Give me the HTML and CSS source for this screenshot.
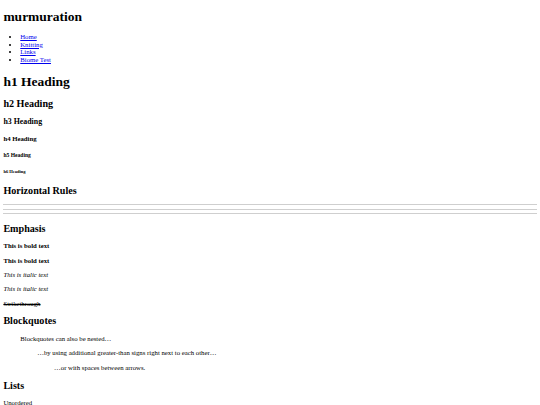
FILE: index.html
```html
<!DOCTYPE html>
<html lang="en">
<head>
    <meta charset="UTF-8">
    <meta name="viewport" content="width=device-width, initial-scale=1.0">
    <title>murmuration</title>
    <link rel="stylesheet" href="styles.css">
</head>
<body>

    <!-- Site header -->
    <header class="site-header">
        <h1 class="site-title">murmuration</h1>
        <nav class="site-nav">
            <ul>
                <li><a href="#">Home</a></li>
                <li><a href="#">Knitting</a></li>
                <li><a href="#">Links</a></li>
                <li><a href="#">Biome Test</a></li>
            </ul>
        </nav>
    </header>

    <!-- Post body -->
    <main class="post">
        <h1>h1 Heading</h1>
        <h2>h2 Heading</h2>
        <h3>h3 Heading</h3>
        <h4>h4 Heading</h4>
        <h5>h5 Heading</h5>
        <h6>h6 Heading</h6>

        <h2>Horizontal Rules</h2>
        <hr>
        <hr>
        <hr>

        <h2>Emphasis</h2>
        <p><strong>This is bold text</strong></p>
        <p><strong>This is bold text</strong></p>
        <p><em>This is italic text</em></p>
        <p><em>This is italic text</em></p>
        <p><s>Strikethrough</s></p>

        <h2>Blockquotes</h2>
        <blockquote>
            <p>Blockquotes can also be nested…</p>
            <blockquote>
                <p>…by using additional greater-than signs right next to each other…</p>
                <blockquote>
                    <p>…or with spaces between arrows.</p>
                </blockquote>
            </blockquote>
        </blockquote>

        <h2>Lists</h2>
        <p>Unordered</p>
        <ul>
            <li>Create a list by starting a line with <code>+</code>, <code>-</code>, or <code>*</code></li>
            <li>Sub-lists are made by indenting 2 spaces</li>
        </ul>
    </main>

</body>
</html>
```

FILE: styles.css
```css
/* Base - plain browser look, scaled down */
body {
    margin: 3.375px;
    font-family: "Liberation Serif", serif;
    font-size: 6.75px;
    line-height: 1.12;
    color: black;
    background: white;
}

a {
    color: #0000EE;
}

ul {
    padding-left: 2.5em;
}

blockquote {
    margin: 1em 2.5em;
}

/* Header */
.site-title {
    margin: 0.42em 0 0.67em;
}

.site-nav ul {
    margin-bottom: 1.55em;
}

/* Horizontal rules */
hr {
    border: none;
    border-top: 1px solid #cfcfcf;
    height: 0;
    margin: 0.5em 0;
}
```
